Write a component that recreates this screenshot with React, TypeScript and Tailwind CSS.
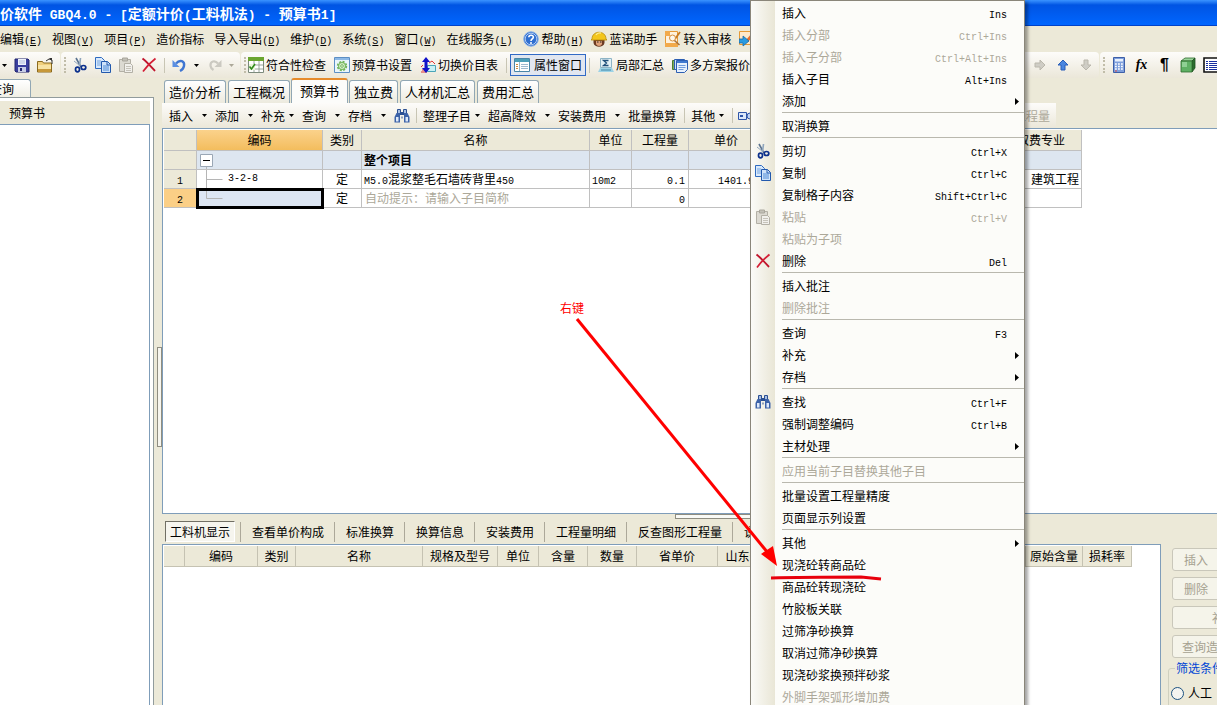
import React from 'react';
import clsx from 'clsx';

/* ---------- text ---------- */

// Latin runs are set in a smaller mono so they take half the width of a Chinese glyph
const Mixed = ({ text, latin = 'text-[10px]' }: { text: string; latin?: string }) => (
  <>
    {text.split(/([\x20-\x7e]+)/).map((part, i) =>
      i % 2 ? (
        <span key={i} className={clsx('leading-none whitespace-pre font-["Liberation_Mono",monospace]', latin)}>
          {/^\([A-Z]\)$/.test(part) ? (
            <>
              (<u>{part[1]}</u>)
            </>
          ) : (
            part
          )}
        </span>
      ) : (
        part
      )
    )}
  </>
);

/* ---------- icons ---------- */

type SvgProps = { children: React.ReactNode; className?: string };

const Svg = ({ children, className = '' }: SvgProps) => (
  <svg viewBox="0 0 16 16" className={clsx('h-4 w-4 shrink-0', className)} fill="none" aria-hidden="true">
    {children}
  </svg>
);

const SaveIcon = () => (
  <Svg>
    <path d="M1 2h13l1 1v12H2l-1-1z" fill="#3a3f9e" stroke="#23276f" />
    <path d="M4 2h8v6H4z" fill="#eef2fb" />
    <path d="M5 4h6M5 6h6" stroke="#b4bfdc" />
    <path d="M4 10h8v5H4z" fill="#c7cde6" />
    <path d="M6 11h2v3H6z" fill="#23276f" />
  </Svg>
);

const FolderIcon = () => (
  <Svg>
    <path d="M.5 4.500h5l1 1.500h8v9h-14z" fill="#f0cf7c" stroke="#8a6a1f" />
    <path d="M1 8h13v6H1z" fill="#f8e3a4" />
    <path d="M1 12h13v3H1z" fill="#c7983a" />
    <path d="M9 4l3-2 3 1v4" stroke="#333" />
    <path d="M12 1l3 0v3z" fill="#333" />
  </Svg>
);

const CutIcon = () => (
  <Svg>
    <path d="M4 1l5 9" stroke="#5b7390" strokeWidth="1.600" />
    <path d="M8.500 1L7.500 9" stroke="#8fa5bd" strokeWidth="1.600" />
    <path d="M2 4l5 4" stroke="#8fa5bd" />
    <ellipse cx="5.500" cy="12.500" rx="2" ry="2.300" stroke="#0a2f8c" strokeWidth="1.700" />
    <ellipse cx="11.500" cy="10.500" rx="2.300" ry="2" stroke="#0a2f8c" strokeWidth="1.700" />
  </Svg>
);

const CopyIcon = () => (
  <Svg>
    <path d="M.5.5h6l3 3v8h-9z" fill="#d9e9fb" stroke="#2f6bc0" />
    <path d="M2 4h4M2 6h4M2 8h4" stroke="#74a5e0" />
    <path d="M6.500 4.500h6l3 3v8h-9z" fill="#cfe3fa" stroke="#2259ad" />
    <path d="M12 4.500v3.500h3.500" stroke="#2259ad" />
    <path d="M8 9h6M8 11h6M8 13h6" stroke="#4f8bd6" />
  </Svg>
);

const PasteIcon = () => (
  <Svg>
    <path d="M1.500 2.500h11v12h-11z" fill="#dcdad2" stroke="#b3b0a6" />
    <path d="M4.500 1h5v3h-5z" fill="#c2c0b7" stroke="#a9a69c" />
    <path d="M6.500 6.500h6l2 2v7h-8z" fill="#f1f0ec" stroke="#b3b0a6" />
    <path d="M8 9.500h5M8 11.500h5M8 13.500h5" stroke="#c6c3ba" />
  </Svg>
);

const DeleteIcon = () => (
  <Svg>
    <path d="M1.500 1.500c4 3 8 7.500 12.500 12.500" stroke="#c0142c" strokeWidth="1.900" />
    <path d="M14.500 1.500C10 5 5.500 9.500 2 14.500" stroke="#d41f36" strokeWidth="1.700" />
  </Svg>
);

const UndoIcon = () => (
  <Svg>
    <path d="M5 6.500C9 2 14 4 13 9c-.5 2.500-2 4-4 5" stroke="#3f76d2" strokeWidth="2.400" />
    <path d="M1.500 3v7h7z" fill="#5b8fe2" />
  </Svg>
);

const RedoIcon = () => (
  <Svg>
    <path d="M11 6.500C8 3 3 4 3.500 9c.3 2 1.500 3 3 4" stroke="#cbc9c1" strokeWidth="2.200" />
    <path d="M14.500 3v7h-7z" fill="#cbc9c1" />
  </Svg>
);

const CheckTableIcon = () => (
  <Svg>
    <path d="M.5.5h15v15H.5z" fill="#fff" stroke="#7c8a7c" />
    <path d="M0 0h16v4H0z" fill="#6aa52f" />
    <path d="M1 8h14M1 12h14M6 4v11M11 4v11" stroke="#9aa69a" />
    <path d="M1 7h6v6H1z" fill="#e8f6d8" />
    <path d="M1.500 9.500l2 2.500L7 7" stroke="#2f8a1a" strokeWidth="1.600" />
  </Svg>
);

const GearBoxIcon = () => (
  <Svg>
    <path d="M.5.5h15v15H.5z" fill="#e9f5fc" stroke="#5d8fc4" />
    <path d="M1 1h14v2H1z" fill="#8db9e6" />
    <circle cx="8" cy="9" r="4.200" stroke="#6fb356" strokeWidth="2" strokeDasharray="2 1.300" />
    <circle cx="8" cy="9" r="3.500" fill="#d6efca" stroke="#6fb356" />
    <circle cx="8" cy="9" r="1.300" fill="#fff" stroke="#6fb356" />
  </Svg>
);

const SwapIcon = () => (
  <Svg>
    <path d="M7.500 8.500h8v6h-8z" fill="#c9f0f4" stroke="#4aa5b8" />
    <path d="M1 10l2-2M9 6l3-2 3 3" stroke="#e03535" />
    <path d="M2 13h3M1 15h6" stroke="#e03535" />
    <path d="M6 0l4 5H7.500v6H10l-4 5-4-5h2.500V5H2z" fill="#1212c8" />
  </Svg>
);

const WindowIcon = () => (
  <Svg>
    <path d="M.5 1.500h15v13H.5z" fill="#fff" stroke="#4a86a8" />
    <path d="M1 2h14v3H1z" fill="#4d9fb8" />
    <path d="M5.500 5v9" stroke="#9bb8c8" />
    <path d="M2 7.500h2M2 9.500h2M2 11.500h2" stroke="#d08a3a" />
    <path d="M7 7.500h7M7 9.500h7M7 11.500h7" stroke="#9fb9cf" />
  </Svg>
);

const SigmaIcon = () => (
  <Svg>
    <path d="M2.500 1.500h11v9h-11z" fill="#e3f1f6" stroke="#8db4c6" />
    <path d="M10.500 3.500h-5l3 2.500-3 2.500h5" stroke="#1f4f7a" strokeWidth="1.300" />
    <path d="M2 11h12l2 4H0z" fill="#9ed3e6" />
    <path d="M3 13h10" stroke="#3f86a8" />
  </Svg>
);

const MultiDocIcon = () => (
  <Svg>
    <path d="M.5 3.500h8v9h-8z" fill="#7fae5a" stroke="#4a7a33" />
    <path d="M2.500 2.500h10v10h-10z" fill="#cfe0f7" stroke="#2d5fb3" />
    <path d="M4.500 3.500h11v9l-3 3h-8z" fill="#e6f0fc" stroke="#2d5fb3" />
    <path d="M5 4h10v2H5z" fill="#3f79d0" />
    <path d="M6.500 8.500h7M6.500 10.500h7M6.500 12.500h5" stroke="#6f9bdc" />
  </Svg>
);

const HelpIcon = () => (
  <Svg>
    <circle cx="8" cy="8" r="7.300" fill="#2f6fd0" stroke="#8fb4e6" />
    <circle cx="8" cy="8" r="5.800" stroke="#cfe0f7" strokeWidth=".8" />
    <path d="M5.800 6.200C6 3.500 10.500 3.600 10.300 6.300 10.200 8 8 8 8 10" stroke="#fff" strokeWidth="1.600" />
    <circle cx="8" cy="12" r="1" fill="#fff" />
  </Svg>
);

const HelmetIcon = () => (
  <Svg>
    <path d="M2.500 8h11v4c-1 5-10 5-11 0z" fill="#6b3b22" />
    <path d="M5 10h6v3c-1 2.500-5 2.500-6 0z" fill="#e0a27a" />
    <path d="M6 11h1.500M9 11h1.500" stroke="#222" />
    <path d="M1 8C1-1 15-1 15 8l1 1H0z" fill="#f3c61b" stroke="#b98c0a" strokeWidth=".8" />
    <path d="M5 4c1-2 3-2.500 5-2" stroke="#fdeb8b" strokeWidth="1.300" />
  </Svg>
);

const AuditIcon = () => (
  <Svg>
    <path d="M.5.5h12v15H.5z" fill="#fff2dc" stroke="#e69a35" />
    <path d="M0 0h5v5H0zM0 12h13v4H0z" fill="#f2aa4a" />
    <path d="M10 8l5-7" stroke="#c77b22" strokeWidth="1.800" />
    <circle cx="7.500" cy="7" r="3" fill="#fdf8ec" stroke="#d9903a" />
    <path d="M9.500 9.500l5 4.500" stroke="#a8713a" strokeWidth="1.600" />
  </Svg>
);

const ImportIcon = () => (
  <Svg>
    <path d="M.5.5h15v13H.5z" fill="#ffe9c9" stroke="#e69a35" />
    <path d="M7 9l6-7 2 2-6 7z" fill="#e27030" />
    <path d="M0 8h4V5l6 5-6 5v-3H0z" fill="#2a9be0" stroke="#166ba8" strokeWidth=".8" />
  </Svg>
);

const FindIcon = () => (
  <Svg>
    <path d="M3.500 1.500h3v5h-3zM9.500 1.500h3v5h-3z" fill="#a9c0e4" stroke="#2b4f92" />
    <path d="M2.500 5L.5 9v5.500h5.500V7h4v7.500h5.500V9l-2-4z" fill="#3c62a8" />
    <path d="M2 9h2.500v4.500H2zM11.500 9H14v4.500h-2.500z" fill="#dce8fa" />
    <path d="M6 4h4v3H6z" fill="#2b4f92" />
    <path d="M7.500 8.500h1v2h-1z" fill="#2b4f92" />
  </Svg>
);

const LinkIcon = () => (
  <Svg>
    <path d="M.5 4.500h8v7h-8z" fill="#dbe7fa" stroke="#2f55a8" />
    <path d="M2 7h3v2H2z" fill="#2f55a8" />
    <circle cx="12" cy="8" r="3" fill="#bcd1f3" stroke="#2f55a8" />
  </Svg>
);

const ArrowIcon = ({ className, fill, stroke }: { className?: string; fill: string; stroke: string }) => (
  <Svg className={className}>
    <path d="M8 3l5 5h-3v5H6V8H3z" fill={fill} stroke={stroke} strokeLinejoin="round" />
  </Svg>
);

const CalcIcon = () => (
  <Svg>
    <path d="M2.500.5h11v15h-11z" fill="#7e9fdc" stroke="#3d5fa8" />
    <path d="M4 2h8v2.500H4z" fill="#e8f0fc" />
    <path d="M4 7h8M4 9.500h8M4 12h8" stroke="#fff" strokeWidth="1.500" strokeDasharray="1.800 1.200" />
    <path d="M4 14h2" stroke="#d94a4a" />
  </Svg>
);

const CubeIcon = () => (
  <Svg>
    <path d="M1 4l4-3h10l-3 3z" fill="#9ad49a" stroke="#2f6b2f" strokeWidth=".8" />
    <path d="M12 4l3-3v10l-3 4z" fill="#2c6e2f" stroke="#1d4f20" strokeWidth=".8" />
    <path d="M1 4h11v11H1z" fill="#5fb064" stroke="#2f6b2f" strokeWidth=".8" />
    <path d="M2 5h5v5H2z" fill="#8fd094" />
  </Svg>
);

const ListIcon = () => (
  <Svg>
    <path d="M1 1h14v14H1z" fill="#fff" stroke="#111" strokeWidth="1.600" />
    <path d="M3 4.500h2M3 6.500h2M3 8.500h2M3 10.500h2M3 12.500h2" stroke="#1a2fa0" />
    <path d="M6 4.500h8M6 6.500h8M6 8.500h8M6 10.500h8M6 12.500h8" stroke="#1a2fa0" />
  </Svg>
);

const Caret = ({ dim = false }: { dim?: boolean }) => (
  <svg viewBox="0 0 5 3" className="h-[3px] w-[5px] shrink-0" aria-hidden="true">
    <path d="M0 0h5L2.500 3z" fill={dim ? '#aca899' : '#000'} />
  </svg>
);

/* ---------- data ---------- */

const menus = ['编辑(E)', '视图(V)', '项目(P)', '造价指标', '导入导出(D)', '维护(D)', '系统(S)', '窗口(W)', '在线服务(L)'];

const iconMenus = [
  { label: '帮助(H)', icon: <HelpIcon /> },
  { label: '蓝诺助手', icon: <HelmetIcon /> },
  { label: '转入审核', icon: <AuditIcon /> },
];

const mainTabs = ['造价分析', '工程概况', '预算书', '独立费', '人材机汇总', '费用汇总'];

const bottomTabs = ['查看单价构成', '标准换算', '换算信息', '安装费用', '工程量明细', '反查图形工程量', '说明'];

type MenuEntry = {
  label: string;
  keys?: string;
  disabled?: boolean;
  sub?: boolean;
  icon?: React.ReactNode;
};

const contextGroups: MenuEntry[][] = [
  [
    { label: '插入', keys: 'Ins' },
    { label: '插入分部', keys: 'Ctrl+Ins', disabled: true },
    { label: '插入子分部', keys: 'Ctrl+Alt+Ins', disabled: true },
    { label: '插入子目', keys: 'Alt+Ins' },
    { label: '添加', sub: true },
  ],
  [{ label: '取消换算' }],
  [
    { label: '剪切', keys: 'Ctrl+X', icon: <CutIcon /> },
    { label: '复制', keys: 'Ctrl+C', icon: <CopyIcon /> },
    { label: '复制格子内容', keys: 'Shift+Ctrl+C' },
    { label: '粘贴', keys: 'Ctrl+V', disabled: true, icon: <PasteIcon /> },
    { label: '粘贴为子项', disabled: true },
    { label: '删除', keys: 'Del', icon: <DeleteIcon /> },
  ],
  [{ label: '插入批注' }, { label: '删除批注', disabled: true }],
  [
    { label: '查询', keys: 'F3' },
    { label: '补充', sub: true },
    { label: '存档', sub: true },
  ],
  [
    { label: '查找', keys: 'Ctrl+F', icon: <FindIcon /> },
    { label: '强制调整编码', keys: 'Ctrl+B' },
    { label: '主材处理', sub: true },
  ],
  [{ label: '应用当前子目替换其他子目', disabled: true }],
  [{ label: '批量设置工程量精度' }, { label: '页面显示列设置' }],
  [
    { label: '其他', sub: true },
    { label: '现浇砼转商品砼' },
    { label: '商品砼转现浇砼' },
    { label: '竹胶板关联' },
    { label: '过筛净砂换算' },
    { label: '取消过筛净砂换算' },
    { label: '现浇砂浆换预拌砂浆' },
    { label: '外脚手架弧形增加费', disabled: true },
  ],
];

/* ---------- bars ---------- */

const TitleBar = () => (
  <header className="flex h-[26px] shrink-0 items-center border-b border-[#0042c8] bg-linear-to-b from-[#3a93ff] via-[#0054e3] via-20% to-[#0066ff]">
    <h1 className="text-[14px] font-bold whitespace-nowrap text-white">
      <Mixed text="价软件 GBQ4.0 - [定额计价(工料机法) - 预算书1]" latin="text-[13px]" />
    </h1>
  </header>
);

const MenuBar = () => (
  <nav className="flex h-[26px] shrink-0 items-center gap-2.5 overflow-hidden whitespace-nowrap">
    {menus.map((m) => (
      <button key={m}>
        <Mixed text={m} />
      </button>
    ))}
    {iconMenus.map((m) => (
      <button key={m.label} className="-mr-[3px] flex items-center gap-[3px]">
        {m.icon}
        <span>
          <Mixed text={m.label} />
        </span>
      </button>
    ))}
    <button aria-label="导入">
      <ImportIcon />
    </button>
  </nav>
);

const Grip = () => <span className="mr-0.5 ml-[3px] h-4 w-0.5 border-l-2 border-dotted border-[#c1bda9]" />;

const Divider = () => <span className="h-[15px] w-px shrink-0 bg-[#c8c5b4]" />;

const ToolIcon = ({ label, children }: { label: string; children: React.ReactNode }) => (
  <button aria-label={label} className="flex w-[23px] shrink-0 items-center justify-center">
    {children}
  </button>
);

const ToolText = ({ icon, label }: { icon: React.ReactNode; label: string }) => (
  <button className="flex shrink-0 items-center gap-0.5">
    {icon}
    <span>{label}</span>
  </button>
);

const band = 'flex items-center bg-linear-to-b from-[#fdfcfa] to-[#ebe7d9]';

const Toolbar = () => (
  <div className="flex h-[26px] shrink-0 gap-px overflow-hidden whitespace-nowrap">
    <div className={clsx(band, 'rounded-r-sm pr-1 pl-0.5')}>
      <Caret />
      <span className="w-[3px]" />
      <ToolIcon label="保存"><SaveIcon /></ToolIcon>
      <ToolIcon label="打开"><FolderIcon /></ToolIcon>
    </div>
    <div className={clsx(band, 'rounded-sm pr-1.5')}>
      <Grip />
      <ToolIcon label="剪切"><CutIcon /></ToolIcon>
      <ToolIcon label="复制"><CopyIcon /></ToolIcon>
      <ToolIcon label="粘贴"><PasteIcon /></ToolIcon>
      <ToolIcon label="删除"><DeleteIcon /></ToolIcon>
      <span className="w-1" />
      <Divider />
      <span className="w-0.5" />
      <ToolIcon label="撤销"><UndoIcon /></ToolIcon>
      <span className="w-1" />
      <Caret />
      <span className="w-1" />
      <ToolIcon label="恢复"><RedoIcon /></ToolIcon>
      <span className="w-[3px]" />
      <Caret dim />
    </div>
    <div className={clsx(band, 'flex-1 gap-2 rounded-sm')}>
      <span className="flex items-center">
        <Grip />
        <ToolText icon={<CheckTableIcon />} label="符合性检查" />
      </span>
      <ToolText icon={<GearBoxIcon />} label="预算书设置" />
      <ToolText icon={<SwapIcon />} label="切换价目表" />
      <span className="flex items-center gap-[3px]">
        <Divider />
        <button className="flex h-[22px] items-center gap-1 border border-[#316ac5] bg-[#e1e6f0] px-[3px]">
          <WindowIcon />
          <span>属性窗口</span>
        </button>
        <Divider />
      </span>
      <ToolText icon={<SigmaIcon />} label="局部汇总" />
      <ToolText icon={<MultiDocIcon />} label="多方案报价" />
      <span className="mr-0.5 ml-auto flex items-center">
        <ToolIcon label="右移"><ArrowIcon className="rotate-90" fill="#cfcdc5" stroke="#bab7ac" /></ToolIcon>
        <ToolIcon label="上移"><ArrowIcon fill="#4a86e0" stroke="#2a5fb8" /></ToolIcon>
        <ToolIcon label="下移"><ArrowIcon className="rotate-180" fill="#cfcdc5" stroke="#bab7ac" /></ToolIcon>
      </span>
    </div>
    <div className={clsx(band, 'w-[117px] shrink-0 overflow-hidden rounded-l-sm')}>
      <Grip />
      <ToolIcon label="计算器"><CalcIcon /></ToolIcon>
      <ToolIcon label="函数">
        <span className="font-['Liberation_Serif',serif] text-[14px] font-bold italic">fx</span>
      </ToolIcon>
      <ToolIcon label="段落">
        <span className="font-['Liberation_Sans',sans-serif] text-[16px] font-bold">¶</span>
      </ToolIcon>
      <ToolIcon label="图形"><CubeIcon /></ToolIcon>
      <ToolIcon label="列表"><ListIcon /></ToolIcon>
    </div>
  </div>
);

/* ---------- left ---------- */

const Sidebar = () => (
  <aside className="flex w-[154px] shrink-0 flex-col">
    <div className="flex h-[18px] shrink-0">
      <button className="flex w-[31px] items-center justify-end overflow-hidden rounded-tr-[3px] border-t border-r border-[#91a7b4] bg-linear-to-b from-white to-[#f0efe6] pr-4 whitespace-nowrap">
        查询
      </button>
    </div>
    <div className="flex flex-1 flex-col border-t border-r border-[#919b9c] bg-white pt-[3px] pr-[3px]">
      <h2 className="h-[23px] shrink-0 bg-[#ece9d8] pl-[9px] leading-[23px]">预算书</h2>
      <div className="flex-1 border-t border-r border-[#7f9db9]" />
    </div>
  </aside>
);

/* ---------- main ---------- */

const MainTabs = () => (
  <div className="flex h-[25px] shrink-0 items-end gap-0.5 pl-0.5">
    {mainTabs.map((t) => (
      <button
        key={t}
        className={clsx(
          'rounded-t-[3px] border border-b-0 border-[#91a7b4] text-[13px] whitespace-nowrap',
          t === '预算书'
            ? '-mx-px h-[25px] border-t-2 border-t-[#e68b2c] bg-[#fcfcfa] px-2 pb-0.5'
            : 'h-[23px] bg-linear-to-b from-white to-[#eceade] px-1'
        )}
      >
        {t}
      </button>
    ))}
  </div>
);

const DropButton = ({ label, tight = false }: { label: string; tight?: boolean }) => (
  <button className={clsx('mr-2 flex shrink-0 items-center', tight ? 'gap-1' : 'gap-[9px]')}>
    <span>{label}</span>
    <Caret />
  </button>
);

const EditBar = () => (
  <div className="flex h-[25px] shrink-0">
    <div className={clsx(band, 'mr-[161px] flex-1 overflow-hidden pr-1.5 pl-[7px] whitespace-nowrap')}>
      <DropButton label="插入" />
      <DropButton label="添加" />
      <DropButton label="补充" tight />
      <DropButton label="查询" />
      <DropButton label="存档" />
      <button aria-label="查找"><FindIcon /></button>
      <span className="w-1.5" />
      <Divider />
      <span className="w-1.5" />
      <DropButton label="整理子目" tight />
      <DropButton label="超高降效" />
      <DropButton label="安装费用" />
      <button>批量换算</button>
      <span className="w-2" />
      <Divider />
      <span className="w-1.5" />
      <DropButton label="其他" tight />
      <Divider />
      <span className="w-[5px]" />
      <LinkIcon />
      <button disabled className="ml-auto text-[#aca899]">工程量</button>
    </div>
  </div>
);

const budgetCols = [
  { name: '', w: 'w-[33px]' },
  { name: '编码', w: 'w-[126px]' },
  { name: '类别', w: 'w-[39px]' },
  { name: '名称', w: 'w-[228px]' },
  { name: '单位', w: 'w-[42px]' },
  { name: '工程量', w: 'w-[57px]' },
  { name: '单价', w: 'w-[75px]' },
  { name: '', w: 'w-[237px]' },
  { name: '取费专业', w: 'w-[81px]' },
];

const cell = 'h-[19px] overflow-hidden border-r border-b border-[#c0c0c0] p-0 whitespace-nowrap';

const BudgetGrid = () => (
  <div className="min-h-0 flex-1 overflow-hidden border-y border-l border-[#7f9db9] bg-white pt-px pl-px">
    <table className="w-[918px] table-fixed border-separate border-spacing-0 leading-4">
      <thead>
        <tr>
          {budgetCols.map((c, i) => (
            <th
              key={i}
              className={clsx(
                'h-[21px] border-r border-b border-[#c0c0c0] p-0 font-normal',
                c.w,
                c.name === '编码' ? 'bg-linear-to-b from-[#fbd28b] to-[#f3bd5d]' : 'bg-[#ece9d8]'
              )}
            >
              {c.name}
            </th>
          ))}
        </tr>
      </thead>
      <tbody>
        <tr className="bg-[#dde6f0]">
          <td className={clsx(cell, 'bg-[#ece9d8]')} />
          <td className={cell}>
            <svg className="block h-[18px] w-8" fill="none" aria-label="折叠">
              <path d="M3.500 3.500h12v12h-12z" fill="#fff" stroke="#9aa7b5" />
              <path d="M6 9.500h7" stroke="#000" />
              <path d="M9.500 16v2" stroke="#b5b5b5" />
            </svg>
          </td>
          <td className={cell} />
          <td className={clsx(cell, 'pl-0.5 font-bold')}>整个项目</td>
          <td className={cell} />
          <td className={cell} />
          <td className={cell} />
          <td className={cell} />
          <td className={cell} />
        </tr>
        <tr>
          <td className={clsx(cell, 'bg-[#ece9d8] text-center')}><Mixed text="1" /></td>
          <td className={cell}>
            <div className="flex items-center">
              <svg className="h-[18px] w-[31px]" fill="none" aria-hidden="true">
                <path d="M9.500 0v18M9.500 9.500h16" stroke="#b5b5b5" />
              </svg>
              <Mixed text="3-2-8" />
            </div>
          </td>
          <td className={clsx(cell, 'text-center')}>定</td>
          <td className={clsx(cell, 'pl-0.5')}><Mixed text="M5.0混浆整毛石墙砖背里450" /></td>
          <td className={clsx(cell, 'pl-0.5')}><Mixed text="10m2" /></td>
          <td className={clsx(cell, 'pr-[3px] text-right')}><Mixed text="0.1" /></td>
          <td className={clsx(cell, 'pr-[3px] text-right')}><Mixed text="1401.95" /></td>
          <td className={cell} />
          <td className={clsx(cell, 'pr-0.5 text-right')}>建筑工程</td>
        </tr>
        <tr>
          <td className={clsx(cell, 'bg-[#fbcf86] text-center')}><Mixed text="2" /></td>
          <td className={clsx(cell, 'bg-[#dde6f3] outline-[3px] -outline-offset-2 outline-black')}>
            <svg className="block h-[18px] w-8" fill="none" aria-hidden="true">
              <path d="M9.500 0v9.500h16" stroke="#b5b5b5" />
            </svg>
          </td>
          <td className={clsx(cell, 'text-center')}>定</td>
          <td className={clsx(cell, 'pl-[3px] text-[#aca899]')}>自动提示：请输入子目简称</td>
          <td className={cell} />
          <td className={clsx(cell, 'pr-[3px] text-right')}><Mixed text="0" /></td>
          <td className={cell} />
          <td className={cell} />
          <td className={cell} />
        </tr>
      </tbody>
    </table>
  </div>
);

/* ---------- bottom ---------- */

const resourceCols = [
  { name: '', w: 'w-[21px]' },
  { name: '编码', w: 'w-[73px]' },
  { name: '类别', w: 'w-[38px]' },
  { name: '名称', w: 'w-[127px]' },
  { name: '规格及型号', w: 'w-[75px]' },
  { name: '单位', w: 'w-[41px]' },
  { name: '含量', w: 'w-[49px]' },
  { name: '数量', w: 'w-[49px]' },
  { name: '省单价', w: 'w-[81px]' },
  { name: '山东省价', w: 'w-[64px]' },
  { name: '', w: 'w-[244px]' },
  { name: '原始含量', w: 'w-[57px]' },
  { name: '损耗率', w: 'w-[49px]' },
];

const sideButton =
  'flex h-[23px] shrink-0 items-center justify-center rounded-[3px] border border-[#c9c7ba] bg-[#f5f4ea] whitespace-nowrap text-[#a5a190]';

const BottomPane = () => (
  <section className="flex h-[191px] shrink-0 flex-col">
    <div className="ml-[513px] h-[5px] w-[90px] shrink-0 border border-[#8f8d80] bg-[#fafaf5]" />
    <div className="flex h-[25px] shrink-0 items-center overflow-hidden pl-[3px] whitespace-nowrap">
      <button className="mr-[5px] h-[21px] border border-t-[#716f64] border-r-white border-b-white border-l-[#716f64] bg-[#f6f5ee] px-1">
        工料机显示
      </button>
      {bottomTabs.map((t) => (
        <button key={t} className="h-5 border-l border-[#aca899] pr-2.5 pl-[11px]">
          {t}
        </button>
      ))}
    </div>
    <div className="flex min-h-0 flex-1">
      <div className="min-w-0 flex-1 overflow-hidden border-x border-t border-[#7f9db9] bg-white pt-px pl-px">
        <table className="w-[968px] table-fixed border-separate border-spacing-0 leading-4">
          <thead>
            <tr>
              {resourceCols.map((c, i) => (
                <th
                  key={i}
                  className={clsx(
                    'h-[21px] overflow-hidden border-r border-b border-[#c5c2b2] bg-[#ece9d8] p-0 font-normal whitespace-nowrap',
                    c.w
                  )}
                >
                  {c.name}
                </th>
              ))}
            </tr>
          </thead>
        </table>
      </div>
      <div className="flex w-14 shrink-0 flex-col gap-1.5 overflow-hidden pt-1 pl-[11px]">
        <button disabled className={clsx(sideButton, 'w-12')}>插入</button>
        <button disabled className={clsx(sideButton, 'w-12')}>删除</button>
        <button disabled className={clsx(sideButton, 'w-[104px]')}>补充</button>
        <button disabled className={clsx(sideButton, 'w-[104px]')}>查询造价信息库</button>
        <fieldset className="-mt-1 -ml-1 w-28 shrink-0 rounded-[3px] border border-[#d0d0bf] pl-0.5">
          <legend className="ml-1 px-px leading-4 whitespace-nowrap text-[#0046d5]">筛选条件</legend>
          <label className="flex items-center gap-1 pt-2 pb-3">
            <input
              type="radio"
              name="filter"
              className="h-[13px] w-[13px] appearance-none rounded-full border border-[#1c5180] bg-[#f4f4f0]"
            />
            人工
          </label>
        </fieldset>
      </div>
    </div>
  </section>
);

/* ---------- context menu ---------- */

const ContextMenu = () => (
  <div
    role="menu"
    className="absolute top-0 left-[750px] w-[275px] border border-[#8a867a] bg-linear-to-r from-[#fbfbf8] to-[#e9e6d6] bg-[length:24px_100%] bg-no-repeat pt-px shadow-[3px_2px_3px_rgba(0,0,0,0.35)]"
  >
    <div className="absolute inset-y-0 right-0 left-6 bg-[#fcfcf9]" />
    <div className="relative">
      {contextGroups.map((group, g) => (
        <div key={g}>
          {g > 0 && <div role="separator" className="ml-[31px] h-[3px] border-t border-[#b9b8ae]" />}
          {group.map((item) => (
            <button
              key={item.label}
              role="menuitem"
              disabled={item.disabled}
              className={clsx(
                'flex h-[22px] w-full items-center whitespace-nowrap',
                item.disabled ? 'text-[#aca899]' : 'text-black'
              )}
            >
              <span className="flex w-[31px] shrink-0 pl-1">{item.icon}</span>
              <span>{item.label}</span>
              {item.keys && (
                <span className="mr-[17px] ml-auto">
                  <Mixed text={item.keys} />
                </span>
              )}
              {item.sub && (
                <svg viewBox="0 0 4 7" className="mr-[5px] ml-auto h-[7px] w-1" aria-hidden="true">
                  <path d="M0 0l4 3.500L0 7z" fill="#000" />
                </svg>
              )}
            </button>
          ))}
        </div>
      ))}
    </div>
  </div>
);

// hand-drawn note: label, arrow and underline over the menu entry
const Annotation = () => (
  <div className="pointer-events-none absolute inset-0">
    <span className="absolute top-[299px] left-[560px] text-[#f00]">右键</span>
    <svg className="h-full w-full" fill="none" aria-hidden="true">
      <path d="M577 319L768 553" stroke="#f00" strokeWidth="3" />
      <path d="M777 566l-16-12 12-8z" fill="#f00" />
      <path d="M771 578c30-1 60-1 90-1l20 2" stroke="#e8000c" strokeWidth="3" />
    </svg>
  </div>
);

const App = () => {
  return (
    <div className="relative flex h-screen flex-col overflow-hidden bg-[#ece9d8] font-['Noto_Sans_CJK_SC',sans-serif] text-[12px] leading-[18px] text-black">
      <TitleBar />
      <MenuBar />
      <Toolbar />
      <div className="flex min-h-0 flex-1">
        <div className="flex pt-px">
          <Sidebar />
        </div>
        <div className="flex w-2 shrink-0 flex-col justify-center pt-2.5">
          <div className="ml-[3px] h-[100px] w-[5px] border border-[#8f8d80] bg-[#f7f6ef]" />
        </div>
        <main className="flex min-w-0 flex-1 flex-col">
          <MainTabs />
          <EditBar />
          <BudgetGrid />
          <BottomPane />
        </main>
      </div>
      <ContextMenu />
      <Annotation />
    </div>
  );
};

export default App;
